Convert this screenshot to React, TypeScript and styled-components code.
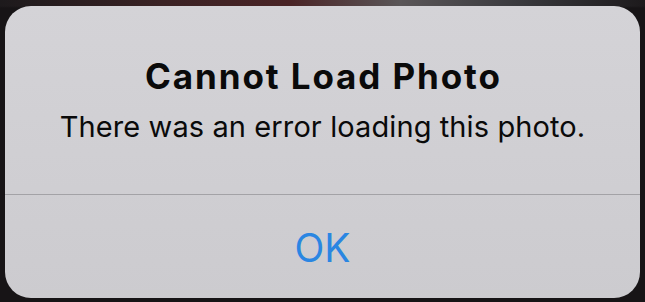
import React from "react";
import styled, { createGlobalStyle } from "styled-components";

const Global = createGlobalStyle`
  html, body {
    margin: 0;
    padding: 0;
    background: #171416;
  }
  body {
    font-family: Inter, "Noto Sans", sans-serif;
    -webkit-font-smoothing: antialiased;
  }
`;

const Backdrop = styled.div`
  width: 645px;
  height: 302px;
  box-sizing: border-box;
  padding: 6px 5px 4px 5px;
  background:
    linear-gradient(to bottom, rgba(0,0,0,0) 0px, rgba(0,0,0,0) 6px, #171416 8px),
    linear-gradient(to right, #1d1a1c 0%, #3a2224 25%, #4a2426 45%, #5a5658 62%, #3a3a3e 80%, #1d1a1c 100%);
`;

const Alert = styled.div`
  width: 635px;
  height: 292px;
  border-radius: 26px;
  background: linear-gradient(to bottom, #d4d3d7 0%, #cccbcf 100%);
  display: flex;
  flex-direction: column;
  overflow: hidden;
`;

const Content = styled.div`
  height: 188px;
  box-sizing: border-box;
  padding-top: 50px;
  display: flex;
  flex-direction: column;
  align-items: center;
`;

const Title = styled.div`
  font-size: 35px;
  line-height: 41px;
  font-weight: 700;
  color: #0a0a0a;
  letter-spacing: 1.9px;
  padding-left: 1.9px;
`;

const Message = styled.div`
  margin-top: 13px;
  font-size: 29px;
  line-height: 34px;
  font-weight: 400;
  color: #0a0a0a;
  letter-spacing: 0.1px;
`;

const Separator = styled.div`
  height: 1px;
  background: #a3a2a6;
`;

const Button = styled.div`
  flex: 1;
  display: flex;
  justify-content: center;
  padding-top: 29px;
  font-size: 39px;
  line-height: 48px;
  color: #2a86e2;
`;

export default function App() {
  return (
    <>
      <Global />
      <Backdrop>
        <Alert>
          <Content>
            <Title>Cannot Load Photo</Title>
            <Message>There was an error loading this photo.</Message>
          </Content>
          <Separator />
          <Button>OK</Button>
        </Alert>
      </Backdrop>
    </>
  );
}
